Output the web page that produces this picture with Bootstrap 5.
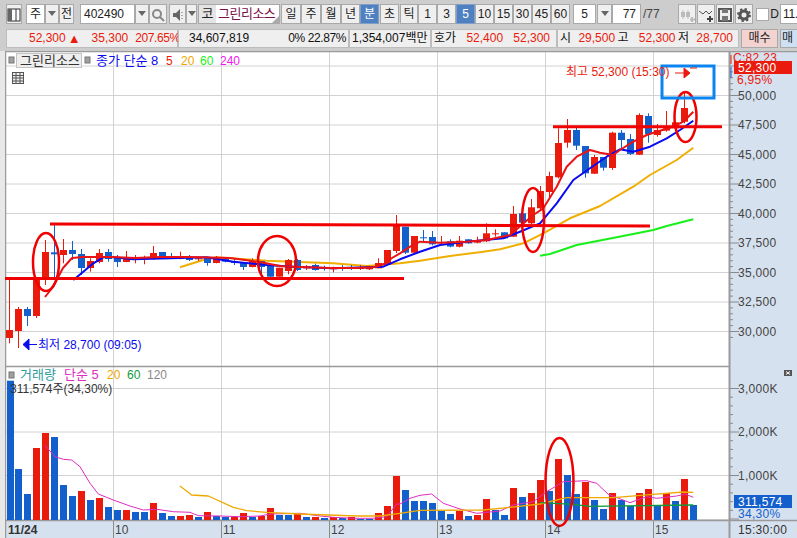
<!DOCTYPE html>
<html lang="ko">
<head>
<meta charset="utf-8">
<title>그린리소스</title>
<link href="https://cdn.jsdelivr.net/npm/bootstrap@5.3.0/dist/css/bootstrap.min.css" rel="stylesheet">
<style>
html,body{margin:0;height:538px;overflow:hidden}
body{background:#cdcdcd;font-family:"Liberation Sans","Noto Sans CJK KR",sans-serif;font-size:12px;color:#222;width:797px}
.tool-row{height:20px;margin:4px 0 0 6px;white-space:nowrap}
.tb{height:20px;line-height:18px;border:1px solid #a9a9a9;background:#efefef;text-align:center;font-size:12px;color:#222;flex:none;padding:0;overflow:hidden}
.tb-w{background:#fff}
.tb-on{background:#4f81c0;color:#fff;border-color:#7f9fca}
.gl{margin-right:1px}.gt{margin-right:2px}.gm{margin-right:3px}.gf{margin-right:4px}.gh{margin-right:6px}
.w11{width:11px}.w13{width:13px}.w14{width:14px}.w15{width:15px}.w16{width:16px}.w17{width:17px}.w18{width:18px}.w19{width:19px}.w20{width:20px}.w23{width:23px}.w29{width:29px}.w55{width:55px}
.name-box{width:82px;display:flex;align-items:stretch;background:#fff;border:1px solid #a9a9a9;height:20px;line-height:18px;flex:none}
.name-ko{width:17px;background:#e4e4e4;text-align:center;font-size:13px}
.name-tx{flex:1;color:#7a0f4a;padding-left:2px;font-size:13px;letter-spacing:-.5px;position:relative}
.name-tx::after{content:"";position:absolute;right:0;bottom:0;border-left:7px solid transparent;border-bottom:7px solid #aaa}
.caret-d{display:inline-block;border-left:4px solid transparent;border-right:4px solid transparent;border-top:5px solid #666;vertical-align:2px}
.code-tx{text-align:left;padding-left:3px}
.lbl-d{width:11px;text-align:center;flex:none;line-height:20px}
.lbl-t{width:37px;flex:none;line-height:20px;color:#444;padding-left:2px}
.cut-in{width:17px;text-align:left;padding-left:2px;border-right:0;letter-spacing:-.3px}
.info-row{height:19px;margin:5px 0 0 6px;white-space:nowrap}
.cell{height:19px;line-height:17px;background:#efefef;border:1px solid #bdbdbd;flex:none;font-size:12px;color:#111;padding:0 2px}
.c1{width:172px;padding-left:22px}.c2{width:171px}.c3{width:82px}.c4{width:126px;padding-right:6px}.c5{width:182px;margin-right:2px;padding-right:5px}
.rd{color:#ea1a0c}
.tri-up{font-size:13px;margin:0 11px 0 2px}
.sp-b{margin-left:7px}
.pct-t{letter-spacing:-.4px}
.sell-b{width:37px;background:#f3d3cf;border:1px solid #a9a9a9;height:19px;line-height:17px;text-align:center;flex:none;margin-right:2px}
.buy-b{width:17px;background:#cfe0f3;border:1px solid #a9a9a9;border-right:0;height:19px;line-height:17px;flex:none;padding-left:1px;overflow:hidden}
.chart-wrap{margin-top:3px;padding-left:5px;height:487px;width:797px;background:#e8e8e8}
.chart-wrap svg{display:block}
svg text{font-family:"Liberation Sans","Noto Sans CJK KR",sans-serif;font-size:12px}
svg text.ko-l{font-size:13px}
svg text.ax-l{letter-spacing:.3px}
</style>
</head>
<body>
<div class="tool-row d-flex align-items-stretch">
  <div class="tb w16 gf"><svg width="14" height="18" viewBox="0 0 14 18"><rect x="1" y="3" width="12" height="12" fill="#fff" stroke="#333"/><rect x="1" y="3" width="4" height="12" fill="#666"/><path d="M9 3v12" stroke="#333"/></svg></div>
  <div class="tb tb-w w19">주</div>
  <div class="tb w14"><span class="caret-d"></span></div>
  <div class="tb w15 gh">전</div>
  <div class="tb tb-w w55 code-tx">402490</div>
  <div class="tb w14"><span class="caret-d"></span></div>
  <div class="tb w18 gt"><svg width="14" height="16" viewBox="0 0 14 16"><circle cx="6" cy="7" r="4" fill="none" stroke="#888" stroke-width="2"/><path d="M9 10l4 4" stroke="#888" stroke-width="2"/></svg></div>
  <div class="tb w17"><svg width="14" height="16" viewBox="0 0 14 16"><path d="M2 6h3l4-4v12l-4-4H2z" fill="#666"/><path d="M11 5v1M11 8v1M11 11v1" stroke="#666"/></svg></div>
  <div class="tb w11 gl"><span class="caret-d"></span></div>
  <div class="name-box gl"><span class="name-ko">코</span><span class="name-tx">그린리소스</span></div>
  <div class="tb w20">일</div><div class="tb w20">주</div><div class="tb w20">월</div><div class="tb w19">년</div>
  <div class="tb tb-on w19 gl">분</div><div class="tb w19 gl">초</div><div class="tb w18">틱</div>
  <div class="tb w19">1</div><div class="tb w19">3</div><div class="tb tb-on w19">5</div><div class="tb w19">10</div><div class="tb w19">15</div><div class="tb w19">30</div><div class="tb w19">45</div><div class="tb w19 gm">60</div>
  <div class="tb tb-w w23 gl">5</div>
  <div class="tb w15"><span class="caret-d"></span></div>
  <div class="tb tb-w w29 text-end pe-1">77</div>
  <div class="lbl-t">/77</div>
  <div class="tb w18 gl"><svg width="16" height="18" viewBox="0 0 16 18"><path d="M4 4v9M9 4v9" stroke="#bbb"/><rect x="2" y="6" width="4" height="5" fill="#bbb"/><rect x="7" y="6" width="4" height="5" fill="#bbb"/><path d="M13 11v5M11 13.500h5" stroke="#bbb" stroke-width="2"/></svg></div>
  <div class="tb w18 gl"><svg width="16" height="18" viewBox="0 0 16 18"><path d="M1 5l4 3 3-3 3 3 3-3" fill="none" stroke="#555"/><path d="M12 10v6M9 13h6" stroke="#444" stroke-width="2"/></svg></div>
  <div class="tb w18 gl"><svg width="16" height="18" viewBox="0 0 16 18"><rect x="2" y="3" width="12" height="12" fill="none" stroke="#555" stroke-width="2"/><rect x="5" y="3" width="6" height="4" fill="#777"/><rect x="5" y="10" width="6" height="5" fill="#777"/></svg></div>
  <div class="tb w18 gm"><svg width="16" height="18" viewBox="0 0 16 18"><circle cx="8" cy="9" r="4" fill="none" stroke="#555" stroke-width="3"/><circle cx="8" cy="9" r="6" fill="none" stroke="#555" stroke-width="2" stroke-dasharray="2.300 2.400"/></svg></div>
  <div class="tb tb-w w13 align-self-center" style="height:13px"></div>
  <div class="lbl-d">D</div>
  <div class="tb tb-w cut-in">11.</div>
</div>
<div class="info-row d-flex">
  <div class="cell c1 d-flex rd"><span>52,300</span><span class="tri-up">▲</span><span>35,300</span><span class="sp-b pct-t">207.65%</span></div>
  <div class="cell c2 d-flex justify-content-between"><span class="ps-2">34,607,819</span><span class="pct-t">0% 22.87%</span></div>
  <div class="cell c3">1,354,007백만</div>
  <div class="cell c4 d-flex justify-content-between"><span>호가 <span class="rd sp-b">52,400</span></span><span class="rd">52,300</span></div>
  <div class="cell c5 d-flex justify-content-between"><span>시 <span class="rd ms-1">29,500</span></span><span>고 <span class="rd sp-b">52,300</span></span><span>저 <span class="rd ms-1">28,700</span></span></div>
  <div class="sell-b">매수</div>
  <div class="buy-b">매</div>
</div>
<div class="chart-wrap">
<svg id="cv" width="792" height="487" viewBox="5 51 792 487" xmlns="http://www.w3.org/2000/svg"></svg>
</div>
<script>
const R='#ea1a0c',B='#1360cc';
const gA=[[390,414,238,430,R],[327,393,321,444,R],[327,348,321,378,B],[236,348,236,354,R],[156,236,120,255,R],[157,163,75,232,B]];
const gB=[[45,60,12,85,R],[45,57,18,75,B],[57,99,42,120,B],[78,99,70,110,R],[54,81,42,85,R],[51,72,42,80,B],[69,81,60,96,B],[69,81,48,82,R],[70,72,60,85,R],[70,72,62,88,R],[54,72,33,74,R],[51,69,51,72,B],[66,71,54,72,B],[63,72,50,73,R],[66,75,60,78,B],[70,72,66,78,R],[69,84,66,92,B],[69,84,63,85,R],[72,80,66,82,B],[78,84,72,90,B]];
const gC=[[81,96,81,105,B],[78,96,70,97,R],[78,96,78,117,B],[93,125,93,125,B],[98,125,98,125,R],[75,108,72,118,R],[75,105,72,108,B],[94,100,90,105,R],[90,105,86,107,B],[97,102,92,107,B],[97,103,95,112,R],[97,102,90,107,B],[96,102,90,105,B],[96,102,90,105,R],[93,103,92,105,R],[84,100,70,100,R],[45,90,45,90,R]];
const gD=[[375,453,345,459,R],[380,458,380,462,B],[408,458,408,460,R],[412,414,390,425,B],[411,433,393,436,B],[426,429,408,432,R],[424,440,418,442,B],[422,440,408,442,R],[418,430,418,431,B],[422,428,410,430,R],[400,424,370,426,R],[400,402,388,410,R],[397,415,397,416,B],[342,410,318,410,R],[340,368,340,369,B],[322,370,297,372,R],[273,325,258,330,R],[228,276,215,295,R],[129,232,85,235,R],[90,128,57,143,R],[90,137,82,150,B],[138,220,138,233,B],[171,221,165,222,R],[171,203,171,212,B],[98,204,95,210,R],[98,120,90,145,B],[117,162,102,165,B],[45,164,40,165,R],[48,102,40,128,B],[90,105,72,110,R],[85,92,33,95,R],[67,85,65,90,R],[24,65,-24,70,R]];
const cd=[];
gA.forEach(a=>cd.push(a.slice(0,4).map(v=>200+v/3).concat(a[4])));
gB.forEach(a=>cd.push(a.slice(0,4).map(v=>235+v/3).concat(a[4])));
gC.forEach(a=>cd.push(a.slice(0,4).map(v=>235+v/3).concat(a[4])));
gD.forEach(a=>cd.push(a.slice(0,4).map(v=>100+v/3).concat(a[4])));
const volA=[[62,B],[327,B],[402,B],[264,R],[219,R],[231,B],[375,B],[408,B],[393,R],[420,B],[414,R],[441,B],[450,B],[450,R],[456,B],[456,B],[429,R],[459,B],[468,B],[468,R],[465,R],[471,B],[456,R],[468,B],[471,B],[471,R],[459,R],[471,B],[468,R],[444,R],[465,B],[465,B],[462,R],[471,B],[471,R],[474,B],[471,R],[474,B],[471,R],[477,B],[477,B],[459,R],[438,R],[348,R],[390,B],[423,B],[423,B],[429,B],[453,B],[462,B],[453,R],[468,B],[465,R],[417,R],[450,B],[465,B],[384,R],[411,B],[399,R],[360,R],[393,B],[297,R],[345,B],[402,B],[366,R],[420,B],[447,B],[399,R],[420,B],[438,B],[399,R],[387,R],[435,B],[399,R],[423,B],[357,R],[435,B]];
const pts=(x0,y0,a)=>a.map(p=>[x0+p[0]/3,y0+p[1]/3]);
const str=a=>a.map(p=>p[0].toFixed(1)+','+p[1].toFixed(1)).join(' ');
const pl=(a,c,w)=>`<polyline points="${str(a)}" fill="none" stroke="${c}" stroke-width="${w}" stroke-linejoin="round"/>`;
const ma5=[[45,297],[53,287],[63,268],[72,258],[83,257],[113,257],[135,258],[160,257],[190,257],[230,258],[260,262],[280,266],[300,267],[330,268],[360,268],[375,267],[384,264],[392,258]].concat(pts(400,100,[[0,460],[30,440],[60,425],[120,428],[200,425],[260,420],[330,405],[400,345],[430,325],[470,260],[500,200],[530,170],[570,150],[600,158],[640,165],[660,150],[700,125],[740,105],[770,95],[820,80],[850,65],[880,35]]));
const ma8=pts(0,200,[[220,240],[250,215],[280,190],[310,172],[340,172],[400,178],[620,172],[700,185],[800,195],[880,200],[1000,205],[1150,200],[1200,178]]).concat(pts(400,100,[[60,455],[120,435],[200,425],[310,415],[360,395],[420,370],[470,310],[520,240],[570,205],[620,170],[660,148],[700,155],[750,140],[800,115],[840,90],[880,62]]));
const ma20=pts(0,200,[[540,202],[610,180],[650,172],[800,182],[1000,190],[1100,198],[1200,190]]).concat(pts(400,100,[[60,482],[150,468],[250,455],[300,448],[370,430],[430,400],[510,355],[600,318],[700,260],[750,225],[830,180],[880,143]]));
const ma60=pts(400,100,[[420,467],[450,462],[530,435],[650,412],[760,390],[800,378],[880,358]]);
const vm=pts(0,360,[[135,256],[165,290],[190,298],[215,300],[240,320],[270,370],[295,402],[340,420],[390,438],[430,450],[470,448],[520,455],[570,457],[595,467],[660,468],[720,470],[780,468],[810,462],[900,460],[960,468],[1000,472],[1060,475],[1120,475],[1160,470],[1190,432]]).concat(pts(400,360,[[0,432],[30,415],[60,406],[95,402],[130,430],[180,447],[230,460],[300,453],[340,435],[400,425],[440,395],[490,365],[560,362],[590,370],[625,403],[690,428],[740,410],[770,415],[830,408],[855,402],[880,412]]));
const vo=pts(0,360,[[540,378],[575,405],[625,408],[700,442],[740,452],[800,457],[900,462],[1070,468],[1140,468],[1200,460]]).concat(pts(400,360,[[60,451],[250,450],[330,442],[420,432],[500,413],[640,413],[750,404],[850,396],[880,397]]));
const vg=pts(400,360,[[420,428],[520,433],[570,439],[880,435]]);
let s='';
const G='#d2d2d2',AX='#d6e1ef',BD='#9a9a9a';
const rect=(x,y,w,h,f,e='')=>`<rect x="${x}" y="${y}" width="${w}" height="${h}" fill="${f}" ${e}/>`;
const ln=(x1,y1,x2,y2,c,w=1)=>`<line x1="${x1}" y1="${y1}" x2="${x2}" y2="${y2}" stroke="${c}" stroke-width="${w}"/>`;
const tx=(x,y,t,c,e='')=>`<text x="${x}" y="${y}" fill="${c}" ${e}>${t}</text>`;
const ax=(x,y,t,c)=>tx(x,y,t,c,'class="ax-l"');
s+=rect(6,52,791,486,'#fff');
s+=rect(729,52,68,486,AX);
s+=rect(6,521,791,17,AX);
[66,95.500,125,154.500,184,213.500,243,272.500,302,331.500].forEach(y=>s+=ln(6,y,729,y,G));
[388.500,432,475.500,519.500].forEach(y=>s+=ln(6,y,729,y,G));
[113.500,221.500,329.500,437.500,545.500,653.500].forEach(x=>{s+=ln(x,52,x,520,G);s+=ln(x,521,x,538,'#8a8a8a');});
s+=ln(5,51.500,797,51.500,BD,1.500)+ln(5.500,51,5.500,538,BD,1.500)+ln(729.500,51,729.500,538,BD,2);
s+=ln(6,366.500,729,366.500,BD,1.500)+ln(6,520.500,797,520.500,BD,1.500);
for(let y=66;y<340;y+=5.900)s+=ln(730,y,(Math.round((y-66)/5.900)%5==0)?739:733,y,'#8a8a8a');
for(let y=388.500;y<520;y+=8.700)s+=ln(730,y,(Math.round((y-388.500)/8.700)%5==0)?739:733,y,'#8a8a8a');
volA.forEach((v,i)=>{const t=360+v[0]/3;const x=i==0?7:6+9*i;s+=rect(x,t.toFixed(1),7,(520-t).toFixed(1),v[1]);});
s+=pl(vm,'#e02cc0',1)+pl(vo,'#efa800',1.300)+pl(vg,'#0e9a3a',1.300);
s+=pl(ma20,'#efae00',2)+pl(ma60,'#18f018',2);
cd.forEach((c,i)=>{const x=9.500+9*i;s+=ln(x,c[2].toFixed(1),x,c[3].toFixed(1),c[4]);s+=rect(x-3.500,c[0].toFixed(1),7,Math.max(1,c[1]-c[0]).toFixed(1),c[4]);});
s+=pl(ma8,'#0a0af0',2)+pl(ma5,'#ea1414',2);
const A='#f00000';
s+=`<polyline points="50,224 400,225 650,226" fill="none" stroke="${A}" stroke-width="3"/>`;
s+=ln(4,278.500,404,278.500,A,3)+ln(553,126.700,722,126.700,A,3);
[[46,262,13,29],[277,261,19,25],[533,220,11,32],[685.500,117,11,25],[559.500,482,14,44]].forEach(e=>s+=`<ellipse cx="${e[0]}" cy="${e[1]}" rx="${e[2]}" ry="${e[3]}" fill="none" stroke="${A}" stroke-width="2.500"/>`);
s+=`<rect x="662" y="66" width="52" height="32" fill="none" stroke="#0a84f0" stroke-width="3"/>`;
s+=rect(9,57,5,6,'#a0a0a0','stroke="#777"');
s+=rect(16.500,53.500,65,14,'#eee','stroke="#c4c4c4"');
s+=tx(20,65,'그린리소스','#333','class="ko-l"');
s+=rect(85,57,5,6,'#a0a0a0','stroke="#777"');
s+=tx(96,65,'종가 단순 8','#0a0af0','class="ko-l"')+tx(166,65,'5','#ea1a0c')+tx(181,65,'20','#efa800')+tx(200,65,'60','#18f018')+tx(220,65,'240','#f018f0');
s+=`<g fill="none" stroke="#555"><rect x="12.500" y="72.500" width="11" height="11" fill="#eee"/><path d="M12.500 75.500h11M12.500 78h11M12.500 81h11M16 73v11M20 73v11"/></g>`;
s+=tx(566,76,'최고 52,300 (15:30)','#ea1a0c')+`<path d="M675 73h10M684 68l6 5-6 5z" fill="#ea1a0c" stroke="#ea1a0c"/>`+ln(690,68,697,68,'#ea1a0c');
s+=`<path d="M37 344.500H28M29 339l-6 5.500 6 5.500z" fill="#0a0af0" stroke="#0a0af0"/>`+tx(38,349,'최저 28,700 (09:05)','#0a0af0');
s+=rect(9,372,5,6,'#a0a0a0','stroke="#777"');
s+=tx(20,379,'거래량','#2a9a9a','class="ko-l"')+tx(64,379,'단순 5','#e02cc0','class="ko-l"')+tx(107,379,'20','#efa800')+tx(127,379,'60','#0e9a3a')+tx(147,379,'120','#888');
s+=tx(10,393,'311,574주(34,30%)','#333');
s+=ax(733,62,'C:82.23','#ea1a0c');
s+=rect(734,61,58,13,'#ea1a0c')+ax(738,72,'52,300','#fff');
s+=ln(731,55,731,64,'#ea1a0c')+ln(731,67,731,78,'#1360cc')+ax(737,84,'6,95%','#ea1a0c');
[['50,000',99.500],['47,500',129],['45,000',158.500],['42,500',188],['40,000',217.500],['37,500',247],['35,000',276.500],['32,500',306],['30,000',335.500]].forEach(v=>s+=ax(738,v[1],v[0],'#444'));
[['3,000K',392.500],['2,000K',436],['1,000K',479.500]].forEach(v=>s+=ax(738,v[1],v[0],'#444'));
s+=rect(784,370,8,6,'#555')+`<path d="M786 371.500l4 3M790 371.500l-4 3" stroke="#fff"/>`;
s+=rect(734,495,58,13,B)+ax(738,506,'311,574','#fff')+ax(738,518,'34,30%',B);
s+=ax(738,534,'15:30:00','#333');
s+=tx(8,534,'11/24','#333','font-weight="700"');
[[115,'10'],[223,'11'],[331,'12'],[439,'13'],[547,'14'],[655,'15']].forEach(v=>s+=tx(v[0],534,v[1],'#444'));
document.getElementById('cv').innerHTML=s;
</script>
<script src="https://cdn.jsdelivr.net/npm/bootstrap@5.3.0/dist/js/bootstrap.bundle.min.js"></script>
</body>
</html>
